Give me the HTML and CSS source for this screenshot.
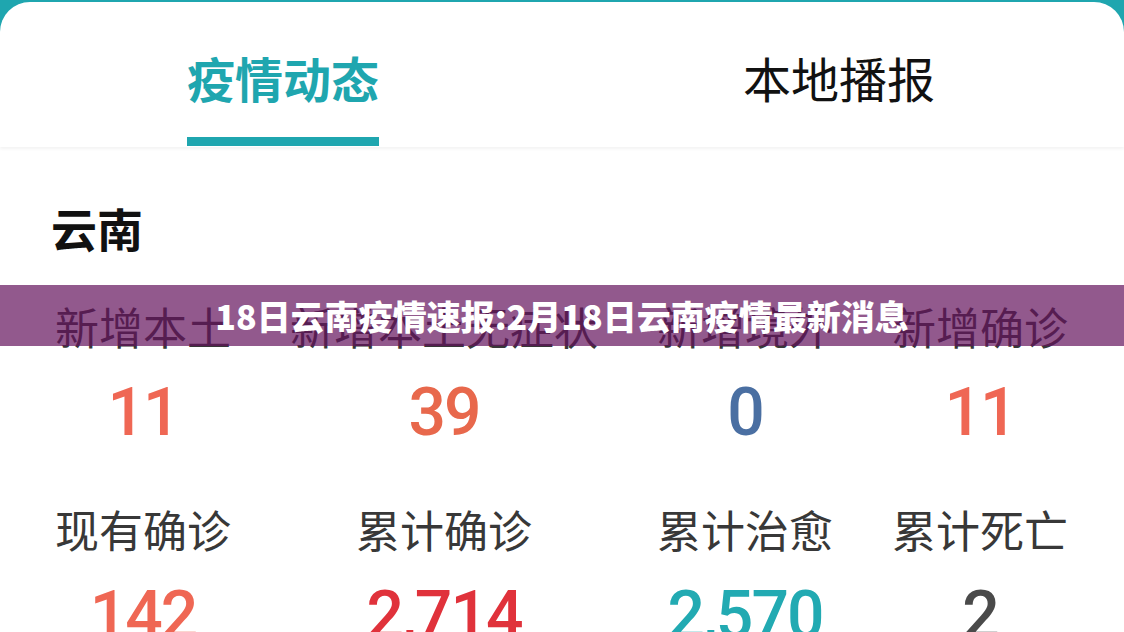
FILE: index.html
```html
<!DOCTYPE html>
<html lang="zh-CN">
<head>
  <meta charset="UTF-8">
  <title>云南疫情速报</title>
  <link rel="stylesheet" href="styles.css">
</head>
<body>
  <div class="card">
    <div class="tabs">
      <div class="tab active"><span>疫情动态</span></div>
      <div class="tab"><span>本地播报</span></div>
    </div>

    <div class="content">
      <h2 class="region">云南</h2>
      <div class="stats">
        <div class="stat"><div class="label">新增本土</div><div class="num salmon">11</div></div>
        <div class="stat"><div class="label">新增本土无症状</div><div class="num orange">39</div></div>
        <div class="stat"><div class="label">新增境外</div><div class="num blue">0</div></div>
        <div class="stat"><div class="label">新增确诊</div><div class="num salmon">11</div></div>

        <div class="stat"><div class="label">现有确诊</div><div class="num salmon">142</div></div>
        <div class="stat"><div class="label">累计确诊</div><div class="num red">2,714</div></div>
        <div class="stat"><div class="label">累计治愈</div><div class="num teal">2,570</div></div>
        <div class="stat"><div class="label">累计死亡</div><div class="num gray">2</div></div>
      </div>
    </div>
  </div>

  <div class="banner">18日云南疫情速报:2月18日云南疫情最新消息</div>
</body>
</html>
```

FILE: styles.css
```css
html, body {
  margin: 0;
  height: 100%;
  overflow: hidden;
}
body {
  background-color: #1fa6af;
  padding-top: 2px;
  box-sizing: border-box;
  font-family: "Noto Sans CJK SC", "Noto Sans", sans-serif;
}
.card {
  background: #fff;
  border-radius: 30px 30px 0 0;
  height: 100%;
}

/* tab header */
.tabs {
  display: flex;
  height: 145px;
  box-shadow: 0 2px 3px rgba(0,0,0,0.05);
}
.tab {
  flex: 1;
  display: flex;
  justify-content: center;
  align-items: flex-start;
  padding-left: 6px;
}
.tab span {
  margin-top: 47px;
  font-size: 48px;
  line-height: 56px;
  color: #111;
  padding-bottom: 32px;
  border-bottom: 9px solid transparent;
}
.tab.active span {
  color: #1fa6af;
  font-weight: bold;
  border-bottom-color: #1fa6af;
}
.tab:last-child {
  padding-left: 2px;
  padding-right: 8px;
}

/* region stats */
.content {
  padding: 0 56px 0 55px;
}
.region {
  margin: 54px 0 0 -4px;
  font-size: 46px;
  line-height: 52px;
  font-weight: bold;
  color: #111;
}
.stats {
  display: grid;
  grid-template-columns: auto auto auto auto;
  justify-content: space-between;
  row-gap: 50px;
  margin-top: 47px;
}
.stat {
  display: flex;
  flex-direction: column;
  align-items: center;
  gap: 21px;
}
.label {
  font-size: 44px;
  line-height: 52px;
  color: #383838;
}
.num {
  font-family: Roboto, "Liberation Sans", sans-serif;
  font-weight: 500;
  font-size: 66px;
  line-height: 80px;
  letter-spacing: -2px;
}
.salmon { color: #ef6754; }
.orange { color: #e8684c; }
.blue { color: #4a6fa2; }
.red { color: #e0323b; }
.teal { color: #22aab2; }
.gray { color: #4a4a4a; }

/* title strip laid over the card */
.banner {
  position: absolute;
  left: 0;
  right: 0;
  top: 285px;
  height: 61px;
  background: rgba(100,18,93,0.7);
  color: #fff;
  font-weight: 900;
  font-size: 34px;
  line-height: 61px;
  text-align: center;
}
```
